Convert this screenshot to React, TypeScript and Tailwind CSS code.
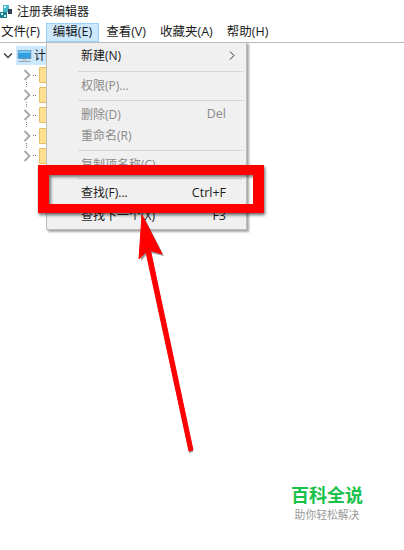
import React from 'react';

const cjk = 'font-["Open_Sans","Noto_Sans_CJK_SC",sans-serif]';

const menuBar = [
  { label: '文件(F)', active: false },
  { label: '编辑(E)', active: true },
  { label: '查看(V)', active: false },
  { label: '收藏夹(A)', active: false },
  { label: '帮助(H)', active: false },
];

const Chevron = () => (
  <svg width="8" height="12" viewBox="0 0 8 12" fill="none" stroke="#a6a6a6" strokeWidth="1.8">
    <path d="M1.5 1 L6.5 6 L1.5 11" />
  </svg>
);

const Folder = () => <div className="w-[10px] h-[16px] bg-[#ffe08f] border border-[#e3bf68] rounded-[1px]"></div>;

const Separator = () => <div className="h-px bg-[#d7d7d7] ml-[31px] mr-[3px]"></div>;

const MenuRow = ({ label, shortcut, disabled, h = 'h-[21px]' }: { label: string; shortcut?: string; disabled?: boolean; h?: string }) => (
  <div className={`${h} flex items-center pl-[34px] pr-[20px] text-[12px] ${disabled ? 'text-[#8a8a8a]' : 'text-[#1a1a1a]'}`}>
    <span className="flex-1">{label}</span>
    {shortcut && <span className="text-[12.5px]">{shortcut}</span>}
  </div>
);

const App: React.FC = () => {
  return (
    <div className={`relative w-[404px] h-[550px] bg-white overflow-hidden text-[#1a1a1a] ${cjk}`}>
      {/* Title */}
      <div className="h-[23px] flex items-center text-[12px] leading-none">
        <svg width="12" height="15" viewBox="0 0 12 15" className="mr-[5px]">
          <rect x="0" y="8" width="7" height="6" fill="#1d7f8c" />
          <rect x="1" y="9" width="2" height="2" fill="#bfeff2" />
          <rect x="4" y="11" width="2" height="2" fill="#bfeff2" />
          <rect x="3" y="1" width="6" height="7" fill="#47b7c4" />
          <rect x="4" y="2" width="2" height="2" fill="#d7fbff" />
          <rect x="8" y="5" width="4" height="5" fill="#2c3e50" />
        </svg>
        <span>注册表编辑器</span>
      </div>

      {/* Menu bar */}
      <div className="h-[20px] flex items-center text-[12.5px] border-b border-[#b9b9b9]">
        {menuBar.map((item) => (
          <div
            key={item.label}
            className={`h-[19px] flex items-center first:pl-[1px] first:pr-[6px] ${item.active ? 'px-[6px] bg-[#cce8ff] border border-[#99d1ff]' : 'px-[7px]'}`}
          >
            {item.label}
          </div>
        ))}
      </div>

      {/* Tree */}
      <div className="pt-[3px] pl-[3px]">
        <div className="h-[19px] flex items-center">
          <svg width="10" height="8" viewBox="0 0 10 8" fill="none" stroke="#444" strokeWidth="1.5" className="mr-[3px]">
            <path d="M1 1.5 L5 5.5 L9 1.5" />
          </svg>
          <div className="h-[19px] w-[30px] bg-[#cce8ff] flex items-center pl-[1px]">
            <svg width="20" height="18" viewBox="0 0 20 18">
              <rect x="1.5" y="1.5" width="17" height="11" fill="#2f9fe0" stroke="#6d8ca3" strokeWidth="1" />
              <rect x="2" y="2" width="16" height="3" fill="#74c9f4" />
              <rect x="7" y="13" width="6" height="2" fill="#b5c6d2" />
              <rect x="2" y="16" width="16" height="1" fill="#7c8c99" />
            </svg>
            <span className="ml-[2px] text-[12px]">计</span>
          </div>
        </div>
        {[0, 1, 2, 3, 4].map((row) => (
          <div key={row} className="relative h-[20.2px] flex items-center pl-[20px]">
            <Chevron />
            <span className="w-[3px] border-t border-dotted border-[#777] ml-[2px] mr-[3px]"></span>
            <Folder />
            {row < 4 && <span className="absolute left-[23px] top-[17px] w-px h-[5px] border-l border-dotted border-[#888]"></span>}
          </div>
        ))}
      </div>

      {/* Edit menu */}
      <div className="absolute left-[46px] top-[42px] w-[201px] h-[188px] bg-[#f0f0f0] border border-[#bcbcbc] shadow-[2px_2px_2px_rgba(0,0,0,0.35)]">
        <div className="pt-[1px]">
          <div className="h-[23px] flex items-center pl-[34px] pr-[11px] text-[12px]">
            <span className="flex-1">新建(N)</span>
            <svg width="6" height="9" viewBox="0 0 6 9" fill="none" stroke="#333" strokeWidth="1">
              <path d="M1 0.5 L5 4.5 L1 8.5" />
            </svg>
          </div>
          <div className="h-[4px]"></div>
          <Separator />
          <div className="h-[3px]"></div>
          <MenuRow label="权限(P)..." disabled />
          <div className="h-[4px]"></div>
          <Separator />
          <div className="h-[3px]"></div>
          <MenuRow label="删除(D)" shortcut="Del" disabled />
          <MenuRow label="重命名(R)" disabled />
          <div className="h-[4px]"></div>
          <Separator />
          <div className="h-[3px]"></div>
          <MenuRow label="复制项名称(C)" disabled />
          <div className="h-[3px]"></div>
          <Separator />
          <div className="h-[3px]"></div>
          <MenuRow label="查找(F)..." shortcut="Ctrl+F" h="h-[22px]" />
          <MenuRow label="查找下一个(X)" shortcut="F3" h="h-[24px]" />
        </div>
      </div>

      {/* Red highlight box */}
      <div className="absolute left-[38px] top-[165px] w-[226px] h-[48px] border-x-[11px] border-t-[10px] border-b-[9px] border-[#ff0000] shadow-[1px_2px_3px_rgba(0,0,0,0.6),inset_2px_2px_3px_rgba(0,0,0,0.5)]"></div>

      {/* Arrow */}
      <svg className="absolute left-0 top-0" width="404" height="550" viewBox="0 0 404 550" fill="none">
        <g transform="translate(2 2)" opacity="0.4">
          <path d="M142 215 L162 254 L149 251 L191 450 L187 451 L145 252 L139 259 Z" fill="#000" />
        </g>
        <path d="M142 215 L162 254 L150.5 250.5 L193 450 L189 451 L146 252 L139 259 Z" fill="#ff0000" stroke="#ff0000" strokeWidth="1" strokeLinejoin="round" />
      </svg>

      {/* Watermark */}
      <div className="absolute left-[291px] top-[484px] w-[72px] flex flex-col items-center">
        <div className="text-[18px] leading-[22px] font-bold text-[#19c24a]">百科全说</div>
        <div className="text-[10.8px] leading-[14px] mt-[2px] text-[#9a9a9a]">助你轻松解决</div>
      </div>
    </div>
  );
};

export default App;
